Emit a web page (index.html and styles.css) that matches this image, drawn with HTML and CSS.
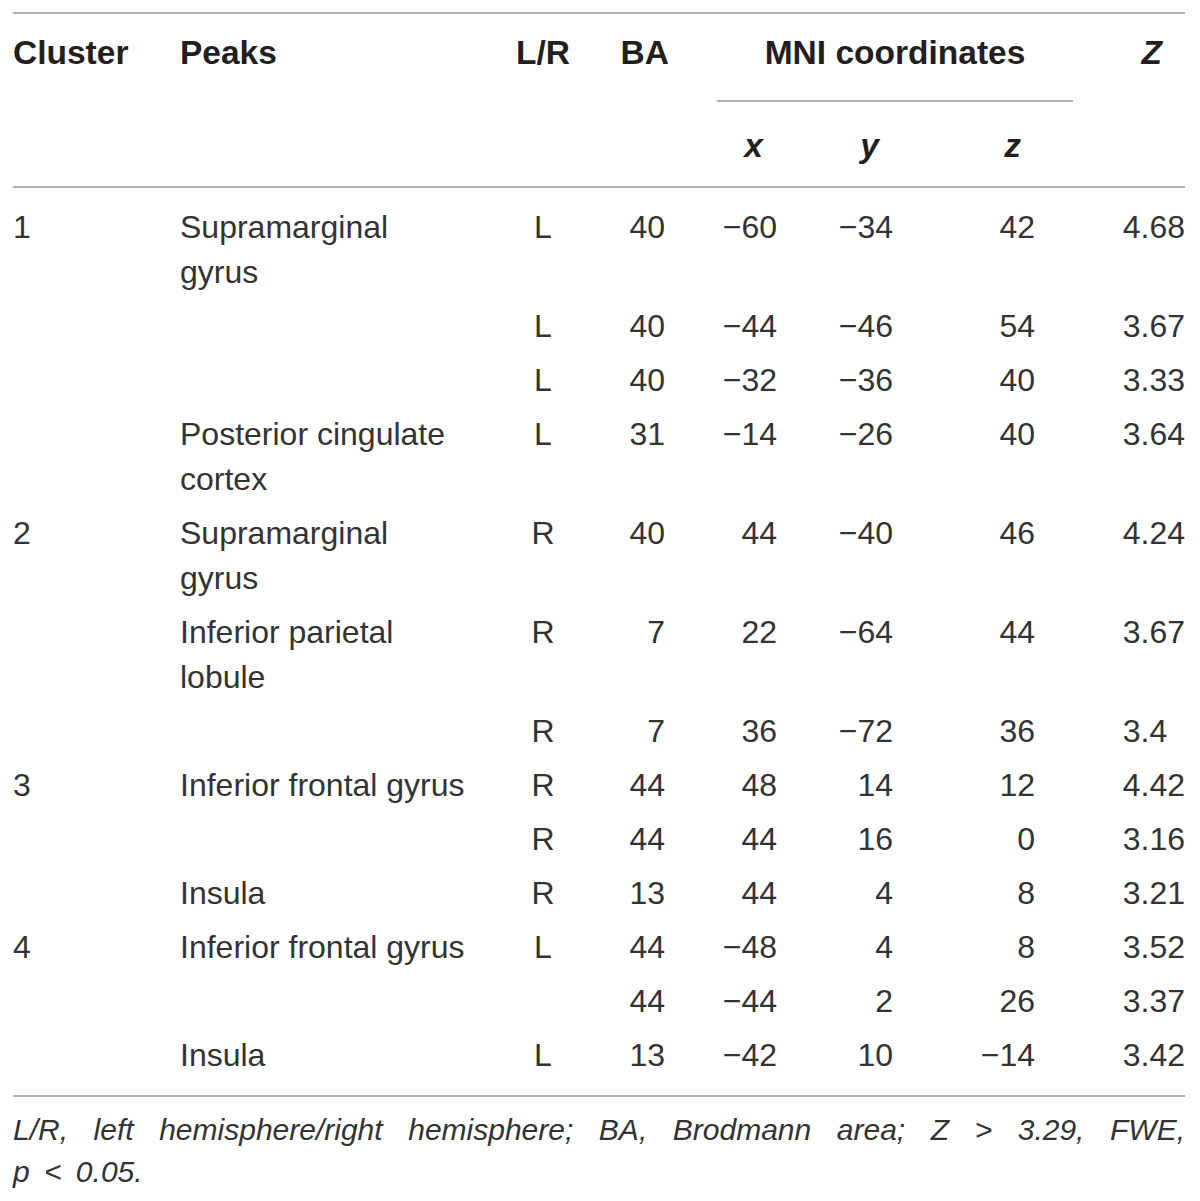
FILE: index.html
```html
<!DOCTYPE html>
<html lang="en">
<head>
  <meta charset="UTF-8">
  <title>Cluster peaks</title>
  <link rel="stylesheet" href="styles.css">
</head>

<body>
<div class="wrapper">
  <table class="peaks-table">
    <colgroup>
      <col class="col-cluster">
      <col class="col-peaks">
      <col class="col-side">
      <col class="col-ba">
      <col class="col-x">
      <col class="col-y">
      <col class="col-z">
      <col class="col-score">
    </colgroup>
    <thead>
      <tr class="head-top">
        <th rowspan="2">Cluster</th>
        <th rowspan="2">Peaks</th>
        <th rowspan="2" class="side">L/R</th>
        <th rowspan="2" class="num">BA</th>
        <th colspan="3" class="mni"><div class="mni-label">MNI coordinates</div></th>
        <th rowspan="2" class="score-head"><i>Z</i></th>
      </tr>
      <tr class="head-sub">
        <th class="axis"><i>x</i></th>
        <th class="axis"><i>y</i></th>
        <th class="axis"><i>z</i></th>
      </tr>
    </thead>
    <tbody>
      <tr>
        <td>1</td><td class="peak">Supramarginal gyrus</td><td class="side">L</td><td class="num ba">40</td>
        <td class="num">&minus;60</td><td class="num">&minus;34</td><td class="num">42</td><td class="num">4.68</td>
      </tr>
      <tr>
        <td></td><td class="peak"></td><td class="side">L</td><td class="num ba">40</td>
        <td class="num">&minus;44</td><td class="num">&minus;46</td><td class="num">54</td><td class="num">3.67</td>
      </tr>
      <tr>
        <td></td><td class="peak"></td><td class="side">L</td><td class="num ba">40</td>
        <td class="num">&minus;32</td><td class="num">&minus;36</td><td class="num">40</td><td class="num">3.33</td>
      </tr>
      <tr>
        <td></td><td class="peak">Posterior cingulate cortex</td><td class="side">L</td><td class="num ba">31</td>
        <td class="num">&minus;14</td><td class="num">&minus;26</td><td class="num">40</td><td class="num">3.64</td>
      </tr>
      <tr>
        <td>2</td><td class="peak">Supramarginal gyrus</td><td class="side">R</td><td class="num ba">40</td>
        <td class="num">44</td><td class="num">&minus;40</td><td class="num">46</td><td class="num">4.24</td>
      </tr>
      <tr>
        <td></td><td class="peak">Inferior parietal lobule</td><td class="side">R</td><td class="num ba">7</td>
        <td class="num">22</td><td class="num">&minus;64</td><td class="num">44</td><td class="num">3.67</td>
      </tr>
      <tr>
        <td></td><td class="peak"></td><td class="side">R</td><td class="num ba">7</td>
        <td class="num">36</td><td class="num">&minus;72</td><td class="num">36</td><td class="num short">3.4</td>
      </tr>
      <tr>
        <td>3</td><td class="peak">Inferior frontal gyrus</td><td class="side">R</td><td class="num ba">44</td>
        <td class="num">48</td><td class="num">14</td><td class="num">12</td><td class="num">4.42</td>
      </tr>
      <tr>
        <td></td><td class="peak"></td><td class="side">R</td><td class="num ba">44</td>
        <td class="num">44</td><td class="num">16</td><td class="num">0</td><td class="num">3.16</td>
      </tr>
      <tr>
        <td></td><td class="peak">Insula</td><td class="side">R</td><td class="num ba">13</td>
        <td class="num">44</td><td class="num">4</td><td class="num">8</td><td class="num">3.21</td>
      </tr>
      <tr>
        <td>4</td><td class="peak">Inferior frontal gyrus</td><td class="side">L</td><td class="num ba">44</td>
        <td class="num">&minus;48</td><td class="num">4</td><td class="num">8</td><td class="num">3.52</td>
      </tr>
      <tr>
        <td></td><td class="peak"></td><td class="side"></td><td class="num ba">44</td>
        <td class="num">&minus;44</td><td class="num">2</td><td class="num">26</td><td class="num">3.37</td>
      </tr>
      <tr>
        <td></td><td class="peak">Insula</td><td class="side">L</td><td class="num ba">13</td>
        <td class="num">&minus;42</td><td class="num">10</td><td class="num">&minus;14</td><td class="num">3.42</td>
      </tr>
    </tbody>
  </table>

  <p class="note">
    <span class="note-first">L/R, left hemisphere/right hemisphere; BA, Brodmann area; Z &gt; 3.29, FWE,</span>
    <span class="note-last">p &lt; 0.05.</span>
  </p>
</div>
</body>
</html>
```

FILE: styles.css
```css
* {
  margin: 0;
  padding: 0;
}

body {
  background-color: #fff;
  color: #231f20;
  font-family: "Liberation Sans", Arial, sans-serif;
}

.wrapper {
  width: 1172px;
  padding: 12px 15px 0 13px;
}

.peaks-table {
  width: 1172px;
  table-layout: fixed;
  border-collapse: collapse;
  border-top: 2px solid #b0b0b0;
  border-bottom: 2px solid #b0b0b0;
  font-size: 32px;
  line-height: 45px;
}

.col-cluster { width: 167px; }
.col-peaks { width: 320px; }
.col-side { width: 86px; }
.col-ba { width: 83px; }
.col-x { width: 108px; }
.col-y { width: 116px; }
.col-z { width: 142px; }
.col-score { width: 150px; }

th {
  font-size: 33.5px;
  font-weight: bold;
  text-align: left;
  vertical-align: top;
}

thead {
  border-bottom: 2px solid #b0b0b0;
}

.head-top th {
  padding-top: 16px;
}

.mni {
  text-align: center;
}

.mni-label {
  width: 356px;
  margin-left: 48px;
  padding-bottom: 25px;
  border-bottom: 2px solid #b0b0b0;
}

.head-sub th {
  padding: 21px 14px 18px 0;
  text-align: right;
}

.score-head {
  text-align: right;
  padding-right: 23px;
}

td {
  padding: 4px 0 5px;
  vertical-align: top;
  color: #333;
}

tbody tr:first-child td {
  padding-top: 17px;
}

tbody tr:last-child td {
  padding-bottom: 17px;
}

.peak {
  padding-right: 30px;
}

.side {
  text-align: center;
}

th.num,
td.num {
  text-align: right;
}

td.ba {
  padding-right: 4px;
}

td.short {
  padding-right: 0.556em;
}

.note {
  padding-top: 12px;
  font-style: italic;
  font-size: 30px;
  line-height: 42px;
  color: #333;
}

.note-first {
  display: block;
  text-align: justify;
  text-align-last: justify;
}

.note-last {
  word-spacing: 6px;
}
```
